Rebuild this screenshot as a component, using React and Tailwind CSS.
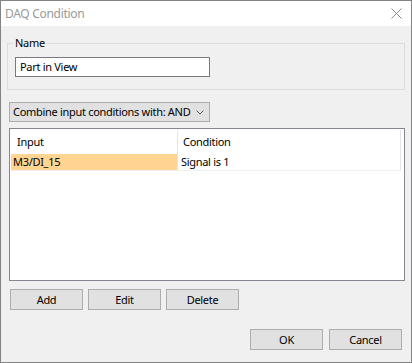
import React from "react";

function WinButton({ children }) {
  return (
    <button className="w-[73px] h-[21px] bg-[#e1e1e1] border border-[#adadad] text-black leading-[19px] text-center">
      {children}
    </button>
  );
}

export default function App() {
  return (
    <div className="w-[412px] h-[363px] border border-[#838383] flex flex-col bg-[#f0f0f0] font-['Noto_Sans',sans-serif] text-[11px] tracking-[-0.3px] text-black">
      {/* Title bar */}
      <div className="h-[25px] bg-white flex items-center justify-between pl-[4px] pr-[9px]">
        <span className="text-[#9a9a9a] text-[12px] leading-[25px]">DAQ Condition</span>
        <svg width="11" height="11" viewBox="0 0 11 11">
          <path d="M0.5 0.5 L10.5 10.5 M10.5 0.5 L0.5 10.5" stroke="#8a8a8a" strokeWidth="1" fill="none" />
        </svg>
      </div>

      {/* Body */}
      <div className="flex-1 flex flex-col">
        {/* Name group */}
        <div className="relative mt-[17px] ml-[6px] w-[398px] h-[47px] border border-[#dcdcdc]">
          <span className="absolute left-[5px] top-[-9px] px-[2px] bg-[#f0f0f0] leading-[16px]">Name</span>
          <div className="mt-[13px] ml-[7px] w-[195px] h-[20px] border border-[#7a7a7a] bg-white pl-[4px] leading-[18px]">
            Part in View
          </div>
        </div>

        {/* Combobox */}
        <div className="mt-[12px] ml-[8px] w-[201px] h-[20px] bg-[#e1e1e1] border border-[#adadad] flex items-center justify-between pl-[3px] pr-[5px]">
          <span className="leading-[18px] whitespace-nowrap">Combine input conditions with: AND</span>
          <svg width="8" height="5" viewBox="0 0 8 5">
            <path d="M0.5 0.5 L4 4 L7.5 0.5" stroke="#606060" strokeWidth="1" fill="none" />
          </svg>
        </div>

        {/* Table */}
        <div className="mt-[6px] ml-[8px] w-[396px] h-[153px] border border-[#828790] bg-white p-[1px]">
          <div className="flex h-[24px]">
            <div className="w-[166px] pl-[6px] leading-[24px]">Input</div>
            <div className="w-[1px] bg-[#e5e5e5]" />
            <div className="w-[222px] pl-[5px] leading-[24px]">Condition</div>
            <div className="w-[1px] bg-[#e5e5e5]" />
          </div>
          <div className="flex h-[16px]">
            <div className="w-[166px] pl-[2px] leading-[16px] bg-[#ffd591]">M3/DI_15</div>
            <div className="w-[1px] bg-[#e5e5e5]" />
            <div className="w-[222px] pl-[3px] leading-[16px]">Signal is 1</div>
            <div className="w-[1px] bg-[#e5e5e5]" />
          </div>
          <div className="w-[390px] h-[1px] bg-[#f0f0f0]" />
        </div>

        {/* Row actions */}
        <div className="mt-[8px] ml-[9px] flex gap-[5px]">
          <WinButton>Add</WinButton>
          <WinButton>Edit</WinButton>
          <WinButton>Delete</WinButton>
        </div>

        {/* Dialog actions */}
        <div className="mt-[19px] flex justify-end gap-[6px] pr-[9px]">
          <WinButton>OK</WinButton>
          <WinButton>Cancel</WinButton>
        </div>
      </div>
    </div>
  );
}
